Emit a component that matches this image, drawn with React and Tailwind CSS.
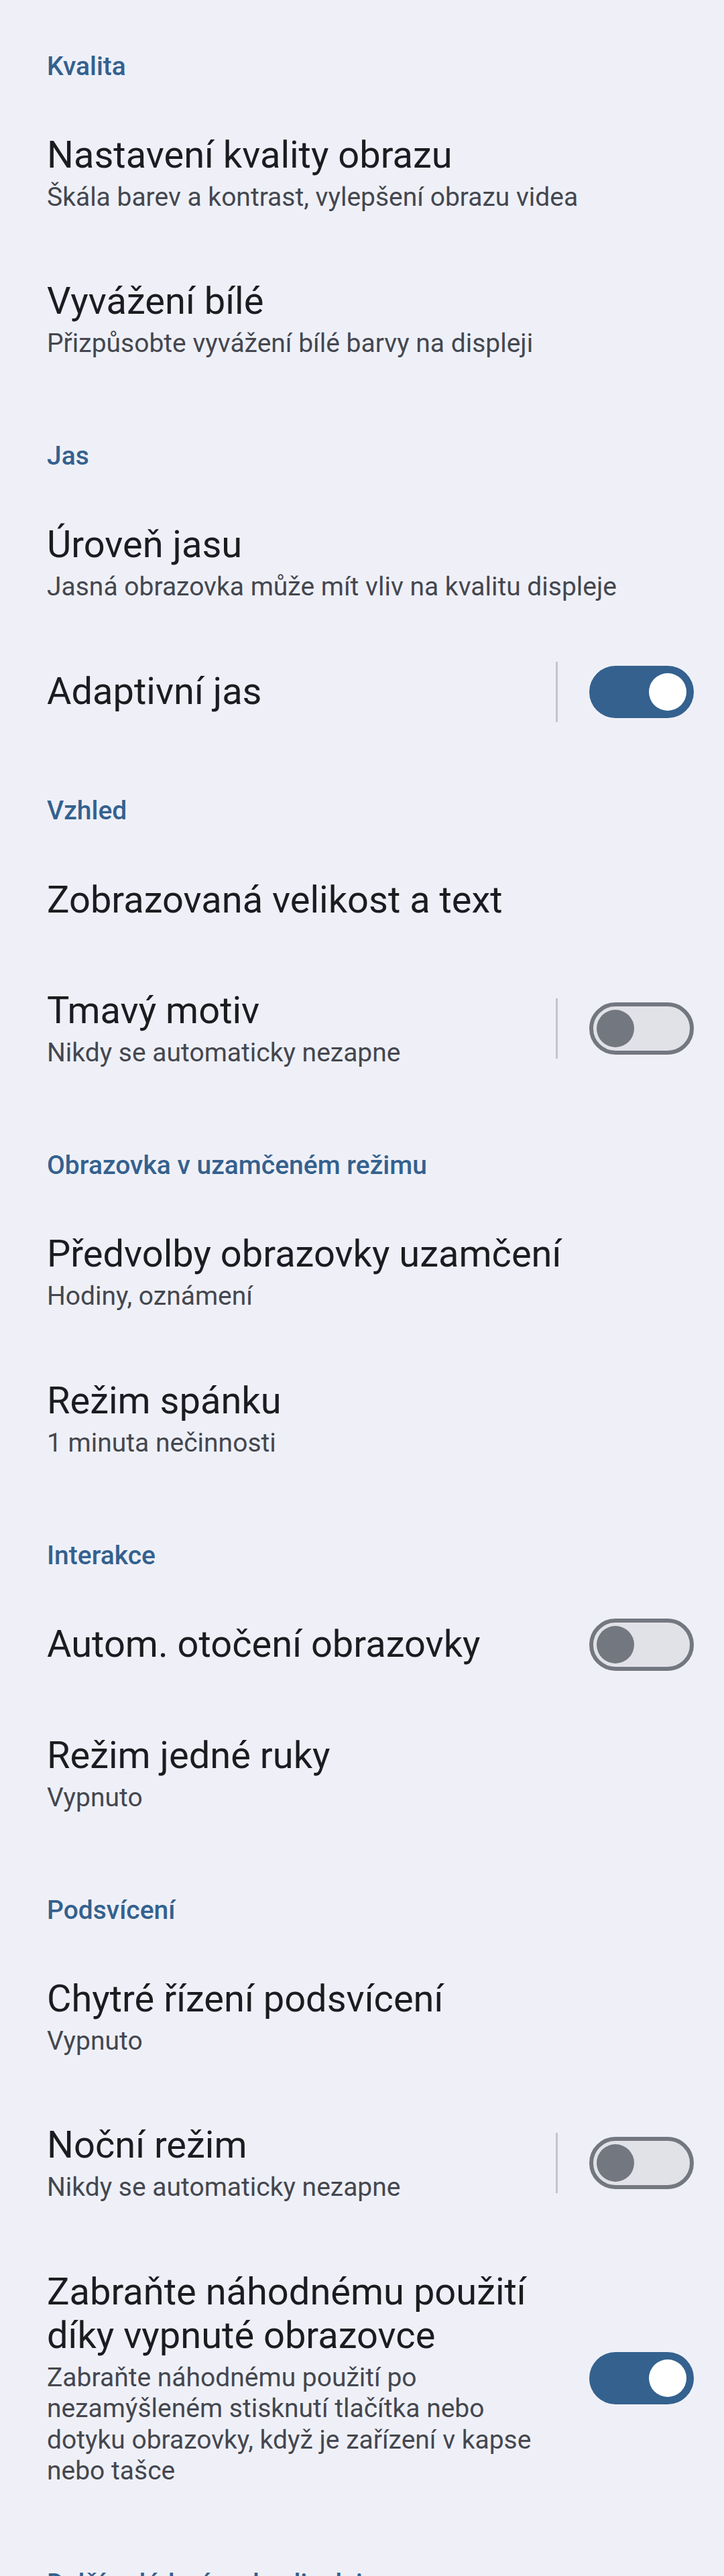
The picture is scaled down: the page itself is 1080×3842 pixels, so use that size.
import React from 'react';

const sections = [
  {
    title: 'Kvalita',
    items: [
      { title: 'Nastavení kvality obrazu', summary: 'Škála barev a kontrast, vylepšení obrazu videa' },
      { title: 'Vyvážení bílé', summary: 'Přizpůsobte vyvážení bílé barvy na displeji' },
    ],
  },
  {
    title: 'Jas',
    items: [
      { title: 'Úroveň jasu', summary: 'Jasná obrazovka může mít vliv na kvalitu displeje' },
      { title: 'Adaptivní jas', toggle: 'on', divider: true },
    ],
  },
  {
    title: 'Vzhled',
    items: [
      { title: 'Zobrazovaná velikost a text' },
      { title: 'Tmavý motiv', summary: 'Nikdy se automaticky nezapne', toggle: 'off', divider: true },
    ],
  },
  {
    title: 'Obrazovka v uzamčeném režimu',
    items: [
      { title: 'Předvolby obrazovky uzamčení', summary: 'Hodiny, oznámení' },
      { title: 'Režim spánku', summary: '1 minuta nečinnosti' },
    ],
  },
  {
    title: 'Interakce',
    items: [
      { title: 'Autom. otočení obrazovky', toggle: 'off' },
      { title: 'Režim jedné ruky', summary: 'Vypnuto' },
    ],
  },
  {
    title: 'Podsvícení',
    items: [
      { title: 'Chytré řízení podsvícení', summary: 'Vypnuto' },
      { title: 'Noční režim', summary: 'Nikdy se automaticky nezapne', toggle: 'off', divider: true },
      {
        title: 'Zabraňte náhodnému použití díky vypnuté obrazovce',
        summary: 'Zabraňte náhodnému použití po nezamýšleném stisknutí tlačítka nebo dotyku obrazovky, když je zařízení v kapse nebo tašce',
        toggle: 'on',
      },
    ],
  },
  {
    title: 'Další ovládací prvky displeje',
    items: [],
  },
];

function Switch({ on }) {
  if (on) {
    return (
      <div className="w-[156px] h-[78px] rounded-full bg-[#34618e] flex items-center justify-end pr-[11px] shrink-0">
        <div className="w-[56px] h-[56px] rounded-full bg-white" />
      </div>
    );
  }
  return (
    <div className="w-[156px] h-[78px] rounded-full bg-[#e1e2e8] border-[6px] border-[#73777f] flex items-center pl-[5px] shrink-0">
      <div className="w-[56px] h-[56px] rounded-full bg-[#73777f]" />
    </div>
  );
}

function Pref({ item }) {
  return (
    <div className="flex items-center min-h-[166px]">
      <div className="flex-1 min-w-0 pl-[70px] pr-[30px] py-[50px]">
        <div className="text-[56px] leading-[65px] text-[#1b1c20]">{item.title}</div>
        {item.summary && (
          <div className="mt-[7px] text-[39px] leading-[46.5px] text-[#44474f]">{item.summary}</div>
        )}
      </div>
      {item.toggle && (
        <div className="w-[251px] shrink-0 flex items-center">
          <div className={item.divider ? 'w-[3px] h-[90px] bg-[#c4c4c8]' : 'w-[3px] h-[90px]'} />
          <div className="ml-[47px]">
            <Switch on={item.toggle === 'on'} />
          </div>
        </div>
      )}
    </div>
  );
}

export default function App() {
  return (
    <div className="min-h-screen w-full bg-[#eff0f7] pt-[4px]" style={{ fontFamily: 'Roboto, "Noto Sans", sans-serif' }}>
      {sections.map((sec) => (
        <section key={sec.title}>
          <h2 className="pl-[70px] pt-[71.5px] pb-[27px] text-[39px] leading-[46px] font-medium text-[#34618e]">
            {sec.title}
          </h2>
          {sec.items.map((item) => (
            <Pref key={item.title} item={item} />
          ))}
        </section>
      ))}
    </div>
  );
}
